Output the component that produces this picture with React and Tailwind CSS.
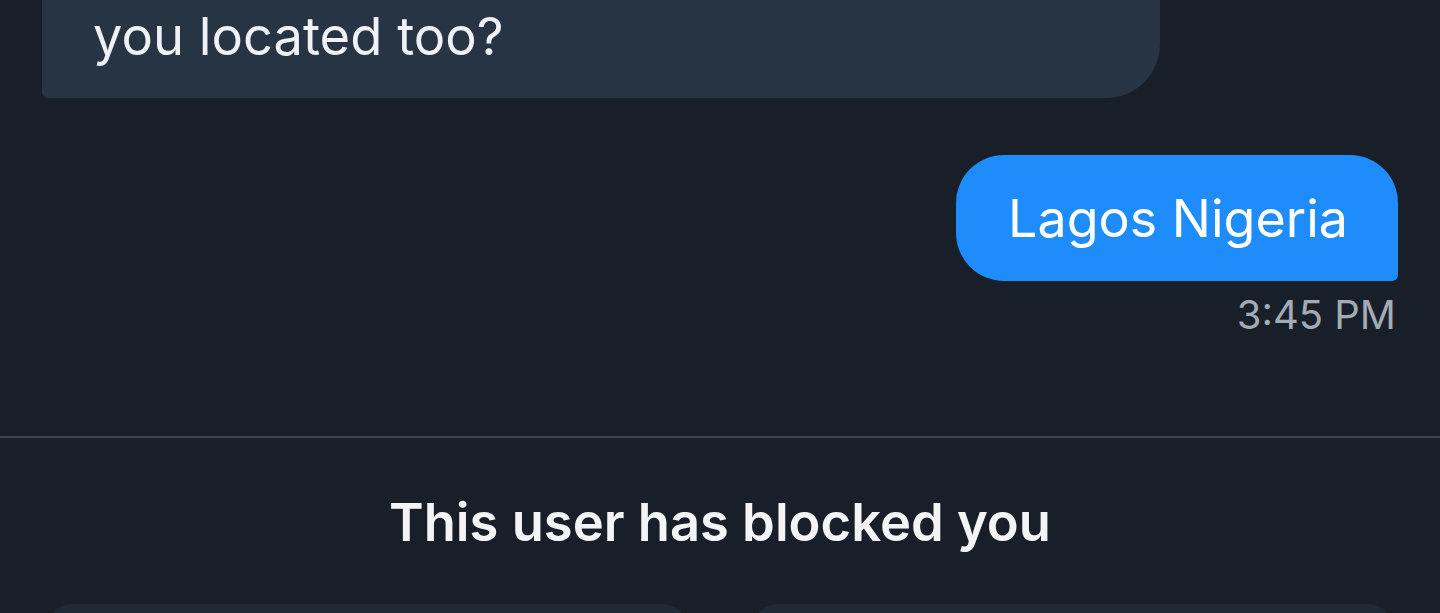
import React from 'react';

const messages = [
    { id: 1, mine: false, text: 'you located too?' },
    { id: 2, mine: true, text: 'Lagos Nigeria', time: '3:45 PM' },
];

const App = () => {
    return (
        <div className="h-[613px] w-full overflow-hidden bg-[#181f29] flex flex-col font-['Inter','Noto_Sans',sans-serif]">
            {/* chat history, pinned to the bottom */}
            <div className="h-[436px] shrink-0 overflow-hidden flex flex-col justify-end px-[42px] pb-[97px]">
                {messages.map(m => m.mine ? (
                    <div key={m.id} className="flex flex-col items-end mt-[57px]">
                        <div className="bg-[#1e8cfa] text-white text-[52px] leading-[60px] pl-[52px] pr-[50px] pt-[34px] pb-[32px] rounded-[48px] rounded-br-[6px]">
                            {m.text}
                        </div>
                        <span className="mt-[10px] text-[40px] leading-[48px] text-[#a3abb5] mr-[2px]">{m.time}</span>
                    </div>
                ) : (
                    <div key={m.id} className="flex">
                        <div className="w-[1118px] bg-[#263443] text-[#eef1f5] text-[52.5px] leading-[64px] pl-[51px] pr-[60px] pt-[80px] pb-[30px] rounded-[54px] rounded-bl-[6px]">
                            {m.text}
                        </div>
                    </div>
                ))}
            </div>

            <div className="h-[2px] bg-[#374554] shrink-0" />

            {/* blocked notice */}
            <div className="flex-1 flex flex-col">
                <p className="mt-[54px] text-center text-[#f3f4f6] font-semibold text-[52.5px] leading-[60px]">
                    This user has blocked you
                </p>
                <div className="mt-[52px] grid grid-cols-2 gap-[66px] px-[48px]">
                    <div className="h-[60px] bg-[#202a36] rounded-t-[24px]" />
                    <div className="h-[60px] bg-[#202a36] rounded-t-[24px]" />
                </div>
            </div>
        </div>
    );
}

export default App;
